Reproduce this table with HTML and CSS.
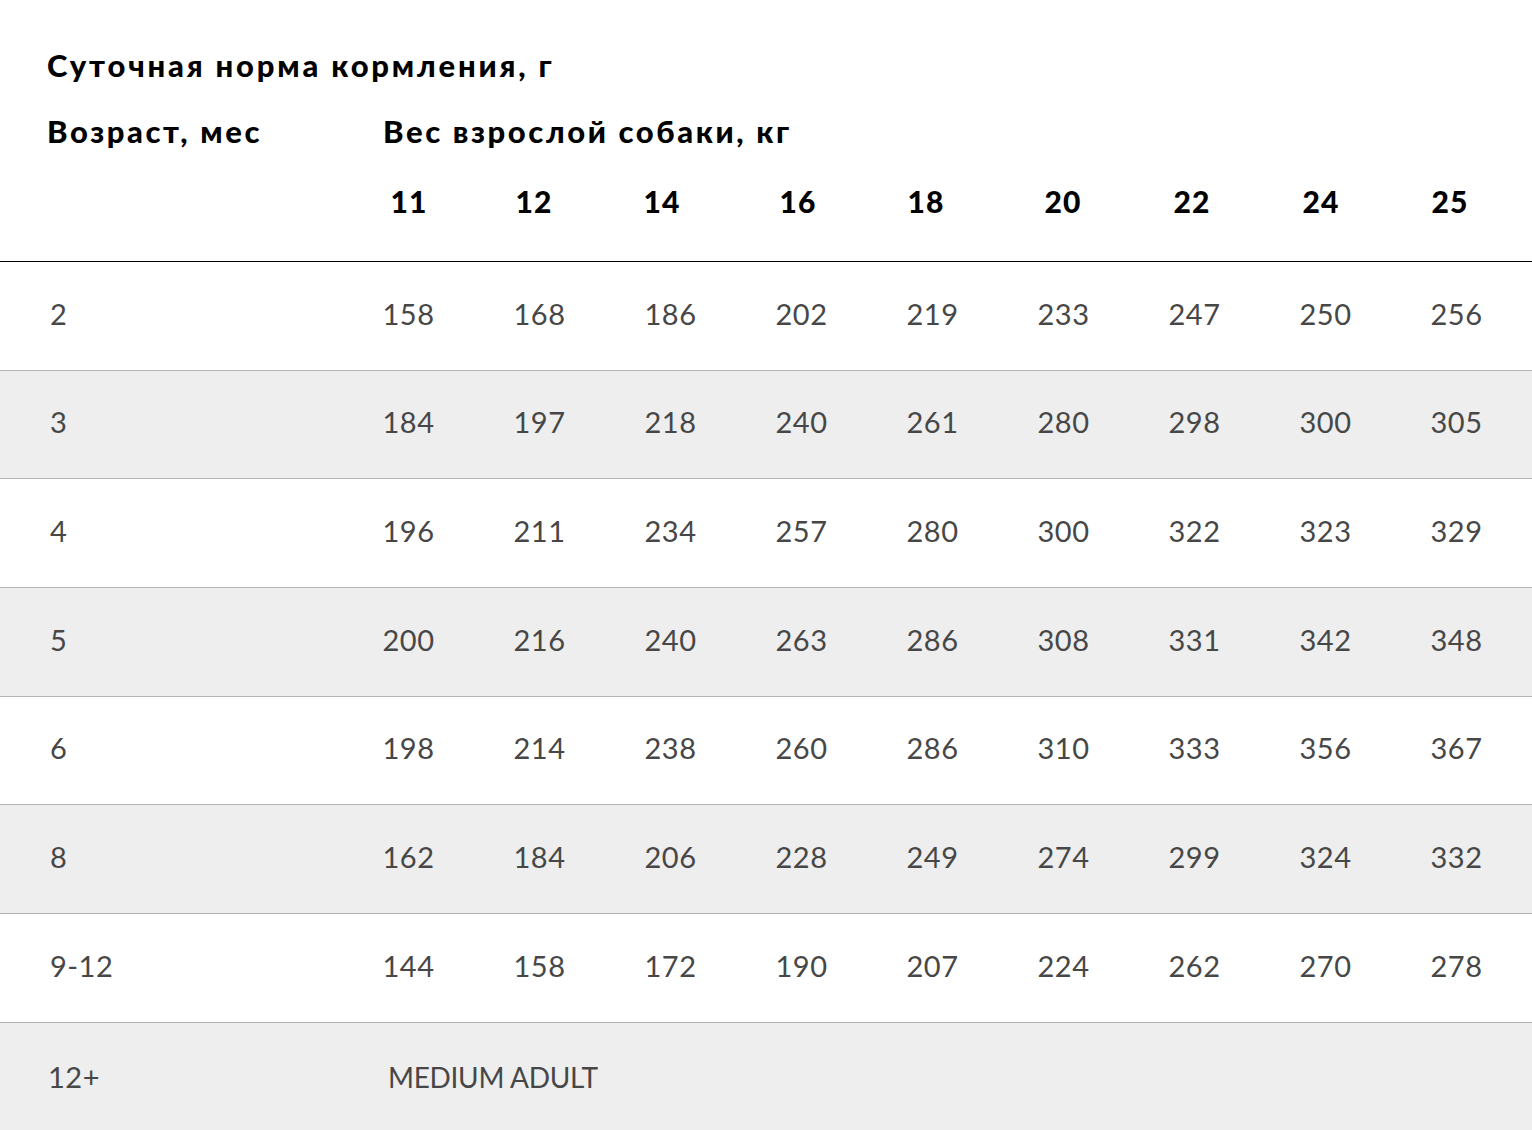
FILE: index.html
```html
<!DOCTYPE html>
<html lang="ru">
<head>
<meta charset="utf-8">
<title>Суточная норма кормления</title>
<link rel="stylesheet" href="styles.css">
</head>
<body>
<div class="page">
  <h1 class="title">Суточная норма кормления, г</h1>
  <div class="grid head">
    <div class="age-head">Возраст, мес</div>
    <div class="weight-head">Вес взрослой собаки, кг</div>
  </div>
  <div class="nums">
    <div></div>
    <div>11</div><div>12</div><div>14</div><div>16</div><div>18</div><div>20</div><div>22</div><div>24</div><div>25</div>
  </div>
  <div class="table">
    <div class="grid row">
      <div class="lbl">2</div>
      <div>158</div><div>168</div><div>186</div><div>202</div><div>219</div><div>233</div><div>247</div><div>250</div><div>256</div>
    </div>
    <div class="grid row alt">
      <div class="lbl">3</div>
      <div>184</div><div>197</div><div>218</div><div>240</div><div>261</div><div>280</div><div>298</div><div>300</div><div>305</div>
    </div>
    <div class="grid row">
      <div class="lbl">4</div>
      <div>196</div><div>211</div><div>234</div><div>257</div><div>280</div><div>300</div><div>322</div><div>323</div><div>329</div>
    </div>
    <div class="grid row alt">
      <div class="lbl">5</div>
      <div>200</div><div>216</div><div>240</div><div>263</div><div>286</div><div>308</div><div>331</div><div>342</div><div>348</div>
    </div>
    <div class="grid row">
      <div class="lbl">6</div>
      <div>198</div><div>214</div><div>238</div><div>260</div><div>286</div><div>310</div><div>333</div><div>356</div><div>367</div>
    </div>
    <div class="grid row alt">
      <div class="lbl">8</div>
      <div>162</div><div>184</div><div>206</div><div>228</div><div>249</div><div>274</div><div>299</div><div>324</div><div>332</div>
    </div>
    <div class="grid row">
      <div class="lbl">9-12</div>
      <div>144</div><div>158</div><div>172</div><div>190</div><div>207</div><div>224</div><div>262</div><div>270</div><div>278</div>
    </div>
    <div class="grid row alt last">
      <div class="lbl first-lbl">12+</div>
      <div class="adult">MEDIUM ADULT</div>
    </div>
  </div>
</div>
</body>
</html>
```

FILE: styles.css
```css
html, body {
  margin: 0;
  padding: 0;
  background: #ffffff;
}

body {
  font-family: "Lato", "Noto Sans", sans-serif;
  width: 1532px;
  height: 1130px;
  overflow: hidden;
}

.page {
  padding-top: 40px;
}

.title {
  margin: 0;
  padding-left: 47px;
  font-size: 31px;
  font-weight: 900;
  letter-spacing: 2.8px;
  line-height: 50px;
  color: #000;
}

.grid {
  display: grid;
  grid-template-columns: 343px repeat(9, 131px) 1fr;
  align-items: center;
}

.head {
  margin-top: 16px;
  height: 50px;
  font-size: 31px;
  font-weight: 900;
  letter-spacing: 2.6px;
  color: #000;
}

.age-head {
  padding-left: 47px;
}

.weight-head {
  grid-column: 2 / -1;
  padding-left: 40px;
}

.nums {
  display: grid;
  grid-template-columns: 344px 130px 120px 136px 136px 120px 154px 104px 154px 104px 1fr;
  align-items: center;
  margin-top: 20px;
  height: 50px;
  font-size: 30px;
  font-weight: 900;
  letter-spacing: 1px;
  color: #000;
  text-align: center;
}

.table {
  margin-top: 35px;
  border-top: 1px solid #000;
}

.row {
  box-sizing: border-box;
  height: 108.67px;
  padding-bottom: 5px;
  border-bottom: 1px solid #b4b4b4;
  font-size: 29px;
  font-weight: 400;
  letter-spacing: 0.5px;
  color: #474747;
  text-align: center;
}

.row.alt {
  background: #eeeeee;
}

.row.last {
  border-bottom: none;
  height: 110px;
  padding-bottom: 2px;
}

.row .lbl {
  text-align: left;
  padding-left: 50px;
}

.row .first-lbl {
  padding-left: 48px;
}

.adult {
  grid-column: 2 / -1;
  text-align: left;
  padding-left: 45px;
  font-size: 28px;
  letter-spacing: -0.3px;
}
```
